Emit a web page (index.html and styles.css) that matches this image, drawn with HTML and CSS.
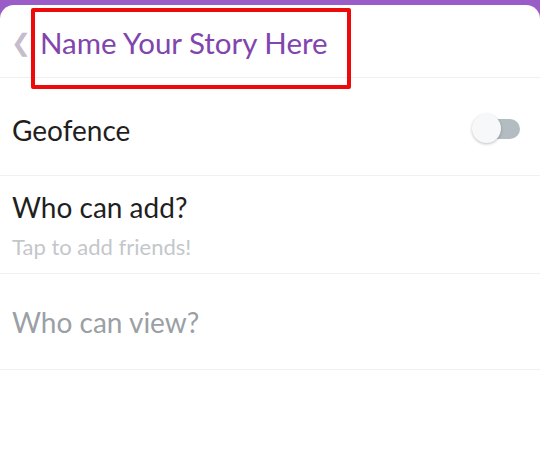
FILE: index.html
```html
<!DOCTYPE html>
<html>
<head>
<meta charset="utf-8">
<link rel="stylesheet" href="styles.css">
</head>
<body>
<div class="screen">
  <div class="sheet">
    <header class="header">
      <span class="back">&#10094;</span>
      <h1 class="title">Name Your Story Here</h1>
      <div class="highlight"></div>
    </header>
    <div class="row row-toggle">
      <span class="label">Geofence</span>
      <span class="toggle"><span class="knob"></span></span>
    </div>
    <div class="row row-stack">
      <span class="label">Who can add?</span>
      <span class="hint">Tap to add friends!</span>
    </div>
    <div class="row row-last">
      <span class="label muted">Who can view?</span>
    </div>
  </div>
</div>
</body>
</html>
```
FILE: styles.css
```css
* { box-sizing: border-box; }
html, body { margin: 0; padding: 0; }
body {
  width: 540px;
  height: 456px;
  overflow: hidden;
  font-family: Lato, "Noto Sans", sans-serif;
  background: #9a5cc6;
}
.screen {
  padding-top: 5px;
  height: 456px;
}
.sheet {
  background: #fff;
  border-radius: 14px 14px 0 0;
  height: 451px;
}
.header {
  position: relative;
  height: 73px;
  display: flex;
  align-items: center;
  padding-left: 11px;
  border-bottom: 1px solid #f0f0f1;
}
.back {
  color: #c5bccc;
  font-size: 24px;
  margin-right: 9px;
  margin-top: 2px;
}
.title {
  margin: 0;
  font-weight: 400;
  font-size: 29.5px;
  color: #8145ad;
  margin-top: 2px;
}
.highlight {
  position: absolute;
  left: 31px;
  top: 3px;
  width: 320px;
  height: 81px;
  border: 4px solid #ee0a0a;
  border-radius: 2px;
}
.row {
  height: 98px;
  border-bottom: 1px solid #f0f0f1;
  padding: 0 12px;
  display: flex;
  align-items: center;
}
.row-last { height: 96px; }
.row-toggle { justify-content: space-between; padding-right: 20px; }
.row-toggle .label { margin-top: 6px; }
.row-stack {
  flex-direction: column;
  align-items: flex-start;
  justify-content: center;
  gap: 9px;
}
.label {
  font-size: 28px;
  color: #1f1f21;
}
.muted { color: #9aa0a5; }
.hint {
  font-size: 22px;
  color: #c3c7cb;
}
.toggle {
  position: relative;
  width: 48px;
  height: 20px;
  margin-top: 4px;
}
.toggle::before {
  content: "";
  position: absolute;
  right: 0;
  top: 0;
  width: 38px;
  height: 20px;
  border-radius: 10px;
  background: #b3bdc1;
}
.knob {
  position: absolute;
  left: 0;
  top: -5px;
  width: 29px;
  height: 29px;
  border-radius: 50%;
  background: #f7f8f9;
  box-shadow: 0 1px 3px rgba(0,0,0,0.25);
}
```
